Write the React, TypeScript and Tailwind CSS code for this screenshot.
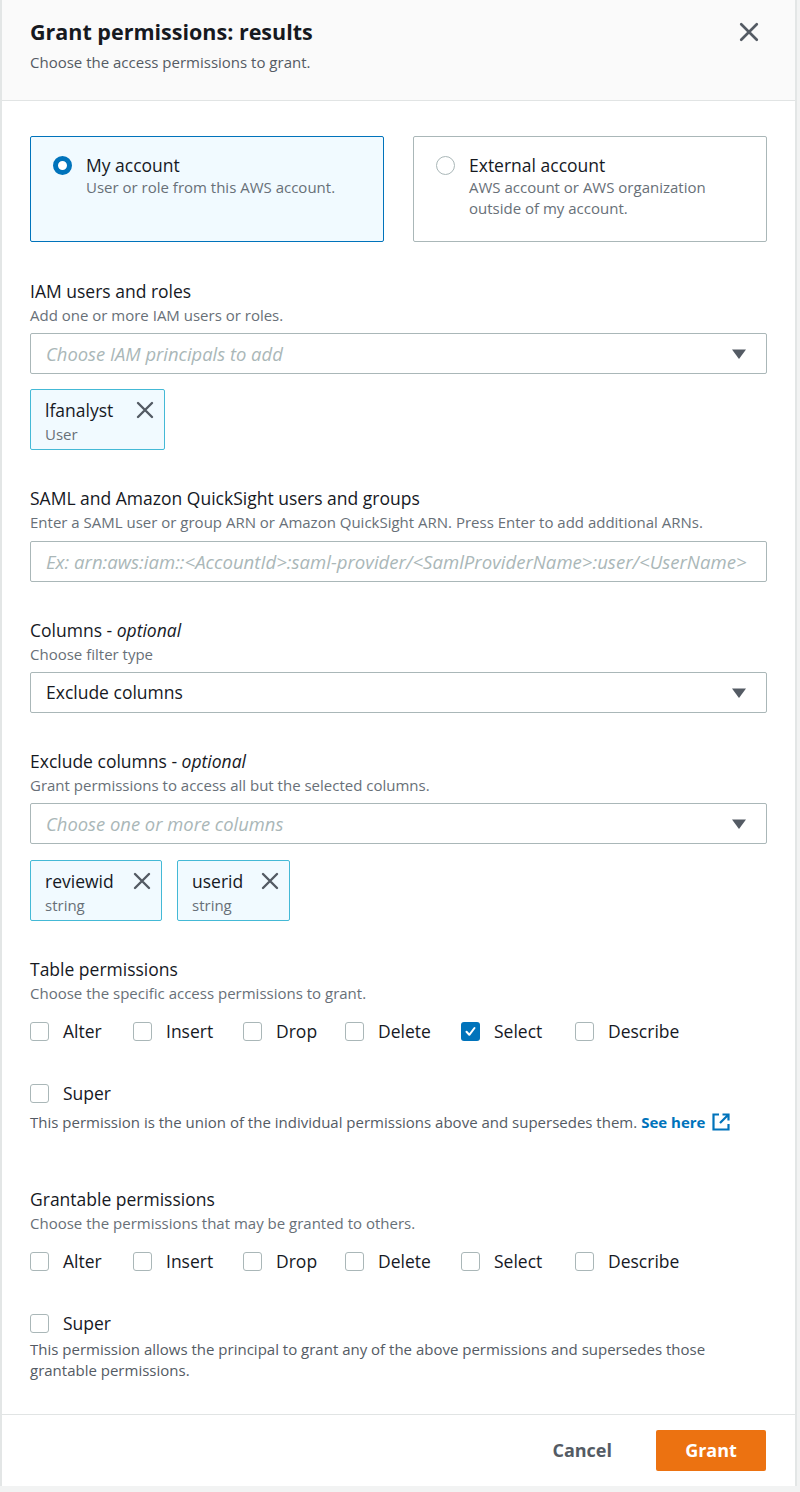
import React from "react";

const XIcon = ({ size = 18 }: { size?: number }) => (
  <svg width={size} height={size} viewBox="0 0 18 18" fill="none">
    <path d="M2 2 L16 16 M16 2 L2 16" stroke="#545b64" strokeWidth="2.4" strokeLinecap="round" />
  </svg>
);

const Caret = () => (
  <svg width="16" height="12" viewBox="0 0 16 12">
    <path d="M1 1.5 H15 L8 11 Z" fill="#545b64" />
  </svg>
);

const Checkbox = ({ checked = false }: { checked?: boolean }) =>
  checked ? (
    <span className="flex h-[19px] w-[19px] shrink-0 items-center justify-center rounded-[3px] bg-[#0073bb]">
      <svg width="13" height="13" viewBox="0 0 13 13" fill="none">
        <path d="M2.5 6.8 L5.3 9.8 L10.5 3" stroke="white" strokeWidth="2" strokeLinecap="round" strokeLinejoin="round" />
      </svg>
    </span>
  ) : (
    <span className="block h-[19px] w-[19px] shrink-0 rounded-[3px] border border-[#aab7b8] bg-white" />
  );

const Select = ({ text, placeholder }: { text: string; placeholder?: boolean }) => (
  <div className="flex h-[41px] items-center justify-between rounded-[2px] border border-[#aab7b8] bg-white pl-[15px] pr-[19px]">
    <span className={placeholder ? "text-[18.4px] italic text-[#aab7b8]" : "text-[17.5px] text-[#16191f]"}>{text}</span>
    <Caret />
  </div>
);

const Token = ({ name, sub, w }: { name: string; sub: string; w: string }) => (
  <div className={`flex h-[61px] ${w} items-start justify-between rounded-[2px] border border-[#44b9d6] bg-[#f1faff] pl-[14px] pr-[10px] pt-[9px]`}>
    <div className="flex flex-col">
      <span className="text-[17.5px] leading-[22px] text-[#16191f]">{name}</span>
      <span className="mt-[3px] text-[15px] leading-[20px] text-[#687078]">{sub}</span>
    </div>
    <span className="mt-[2px]">
      <XIcon size={18} />
    </span>
  </div>
);

const perms: { label: string; w: string }[] = [
  { label: "Alter", w: "w-[103px]" },
  { label: "Insert", w: "w-[110px]" },
  { label: "Drop", w: "w-[102px]" },
  { label: "Delete", w: "w-[116px]" },
  { label: "Select", w: "w-[114px]" },
  { label: "Describe", w: "w-[110px]" },
];

const PermRow = ({ checkedLabel }: { checkedLabel?: string }) => (
  <div className="flex h-[24px] items-center">
    {perms.map((p) => (
      <div key={p.label} className={`flex items-center ${p.w}`}>
        <Checkbox checked={p.label === checkedLabel} />
        <span className="ml-[14px] text-[17.5px] text-[#16191f]">{p.label}</span>
      </div>
    ))}
  </div>
);

const Label = ({ children }: { children: React.ReactNode }) => (
  <div className="text-[17.5px] leading-[22px] text-[#16191f]">{children}</div>
);
const Sub = ({ children }: { children: React.ReactNode }) => (
  <div className="mt-[3px] text-[15px] leading-[20px] text-[#687078]">{children}</div>
);

export default function App() {
  return (
    <div
      className="h-[1492px] w-[800px] bg-[#f2f3f3]"
      style={{ fontFamily: '"Open Sans", "Noto Sans", sans-serif' }}
    >
      <div className="flex w-[797px] flex-col border-x-2 border-[#e3e6e6] bg-white">
        {/* Header */}
        <div className="flex h-[101px] items-start justify-between border-b border-[#e1e4e4] bg-[#fafafa] pl-[28px] pr-[36px] pt-[18px]">
          <div>
            <div className="text-[21.5px] font-bold leading-[28px] text-[#16191f]">Grant permissions: results</div>
            <div className="mt-[6px] text-[15px] leading-[20px] text-[#545b64]">Choose the access permissions to grant.</div>
          </div>
          <span className="mt-[4px]">
            <XIcon size={20} />
          </span>
        </div>

        {/* Body */}
        <div className="flex flex-col px-[28px] pb-[33px] pt-[35px]">
          <div className="grid grid-cols-2 gap-[29px]">
            <div className="flex h-[106px] items-start rounded-[2px] border border-[#0073bb] bg-[#f1faff] pl-[22px] pt-[16px]">
              <span className="mt-[3px] block h-[19px] w-[19px] shrink-0 rounded-full border-[5.5px] border-[#0073bb] bg-white" />
              <div className="ml-[14px]">
                <div className="text-[17.5px] leading-[24px] text-[#16191f]">My account</div>
                <div className="text-[15px] leading-[21px] text-[#687078]">User or role from this AWS account.</div>
              </div>
            </div>
            <div className="flex h-[106px] items-start rounded-[2px] border border-[#aab7b8] bg-white pl-[22px] pt-[16px]">
              <span className="mt-[3px] block h-[19px] w-[19px] shrink-0 rounded-full border-[1.5px] border-[#aab7b8] bg-white" />
              <div className="ml-[14px]">
                <div className="text-[17.5px] leading-[24px] text-[#16191f]">External account</div>
                <div className="text-[15px] leading-[21px] text-[#687078]">
                  AWS account or AWS organization
                  <br />
                  outside of my account.
                </div>
              </div>
            </div>
          </div>

          <div className="mt-[38px]">
            <Label>IAM users and roles</Label>
            <Sub>Add one or more IAM users or roles.</Sub>
          </div>
          <div className="mt-[8px]">
            <Select text="Choose IAM principals to add" placeholder />
          </div>
          <div className="mt-[15px] flex">
            <Token name="lfanalyst" sub="User" w="w-[135px]" />
          </div>

          <div className="mt-[37px]">
            <Label>SAML and Amazon QuickSight users and groups</Label>
            <Sub>Enter a SAML user or group ARN or Amazon QuickSight ARN. Press Enter to add additional ARNs.</Sub>
          </div>
          <div className="mt-[9px] flex h-[41px] items-center overflow-hidden rounded-[2px] border border-[#aab7b8] bg-white pl-[15px]">
            <span className="whitespace-nowrap text-[18.6px] italic text-[#aab7b8]">
              Ex: arn:aws:iam::&lt;AccountId&gt;:saml-provider/&lt;SamlProviderName&gt;:user/&lt;UserName&gt;
            </span>
          </div>

          <div className="mt-[37px]">
            <Label>
              Columns - <i>optional</i>
            </Label>
            <Sub>Choose filter type</Sub>
          </div>
          <div className="mt-[8px]">
            <Select text="Exclude columns" />
          </div>

          <div className="mt-[37px]">
            <Label>
              Exclude columns - <i>optional</i>
            </Label>
            <Sub>Grant permissions to access all but the selected columns.</Sub>
          </div>
          <div className="mt-[8px]">
            <Select text="Choose one or more columns" placeholder />
          </div>
          <div className="mt-[16px] flex gap-[15px]">
            <Token name="reviewid" sub="string" w="w-[132px]" />
            <Token name="userid" sub="string" w="w-[113px]" />
          </div>

          <div className="mt-[37px]">
            <Label>Table permissions</Label>
            <Sub>Choose the specific access permissions to grant.</Sub>
          </div>
          <div className="mt-[16px]">
            <PermRow checkedLabel="Select" />
          </div>
          <div className="mt-[38px] flex h-[24px] items-center">
            <Checkbox />
            <span className="ml-[14px] text-[17.5px] text-[#16191f]">Super</span>
          </div>
          <div className="mt-[7px] flex items-center text-[15px] leading-[20px] text-[#545b64]">
            <span>This permission is the union of the individual permissions above and supersedes them.</span>
            <span className="ml-[4px] font-bold text-[#0073bb]">See here</span>
            <svg className="ml-[6px]" width="20" height="20" viewBox="0 0 20 20" fill="none">
              <path d="M8 2.5 H2.5 V17.5 H17.5 V12" stroke="#0073bb" strokeWidth="2.2" />
              <path d="M11.5 2.5 H17.5 V8.5 M17.5 2.5 L9 11" stroke="#0073bb" strokeWidth="2.2" />
            </svg>
          </div>

          <div className="mt-[56px]">
            <Label>Grantable permissions</Label>
            <Sub>Choose the permissions that may be granted to others.</Sub>
          </div>
          <div className="mt-[16px]">
            <PermRow />
          </div>
          <div className="mt-[38px] flex h-[24px] items-center">
            <Checkbox />
            <span className="ml-[14px] text-[17.5px] text-[#16191f]">Super</span>
          </div>
          <div className="mt-[4px] text-[15px] leading-[21px] text-[#545b64]">
            This permission allows the principal to grant any of the above permissions and supersedes those
            <br />
            grantable permissions.
          </div>
        </div>

        {/* Footer */}
        <div className="flex h-[72px] items-center justify-end border-t border-[#e1e4e4] pr-[29px]">
          <span className="text-[18px] font-bold text-[#545b64]">Cancel</span>
          <span className="ml-[44px] flex h-[41px] w-[110px] items-center justify-center rounded-[2px] bg-[#ec7211] text-[18px] font-bold text-white">
            Grant
          </span>
        </div>
      </div>
    </div>
  );
}
